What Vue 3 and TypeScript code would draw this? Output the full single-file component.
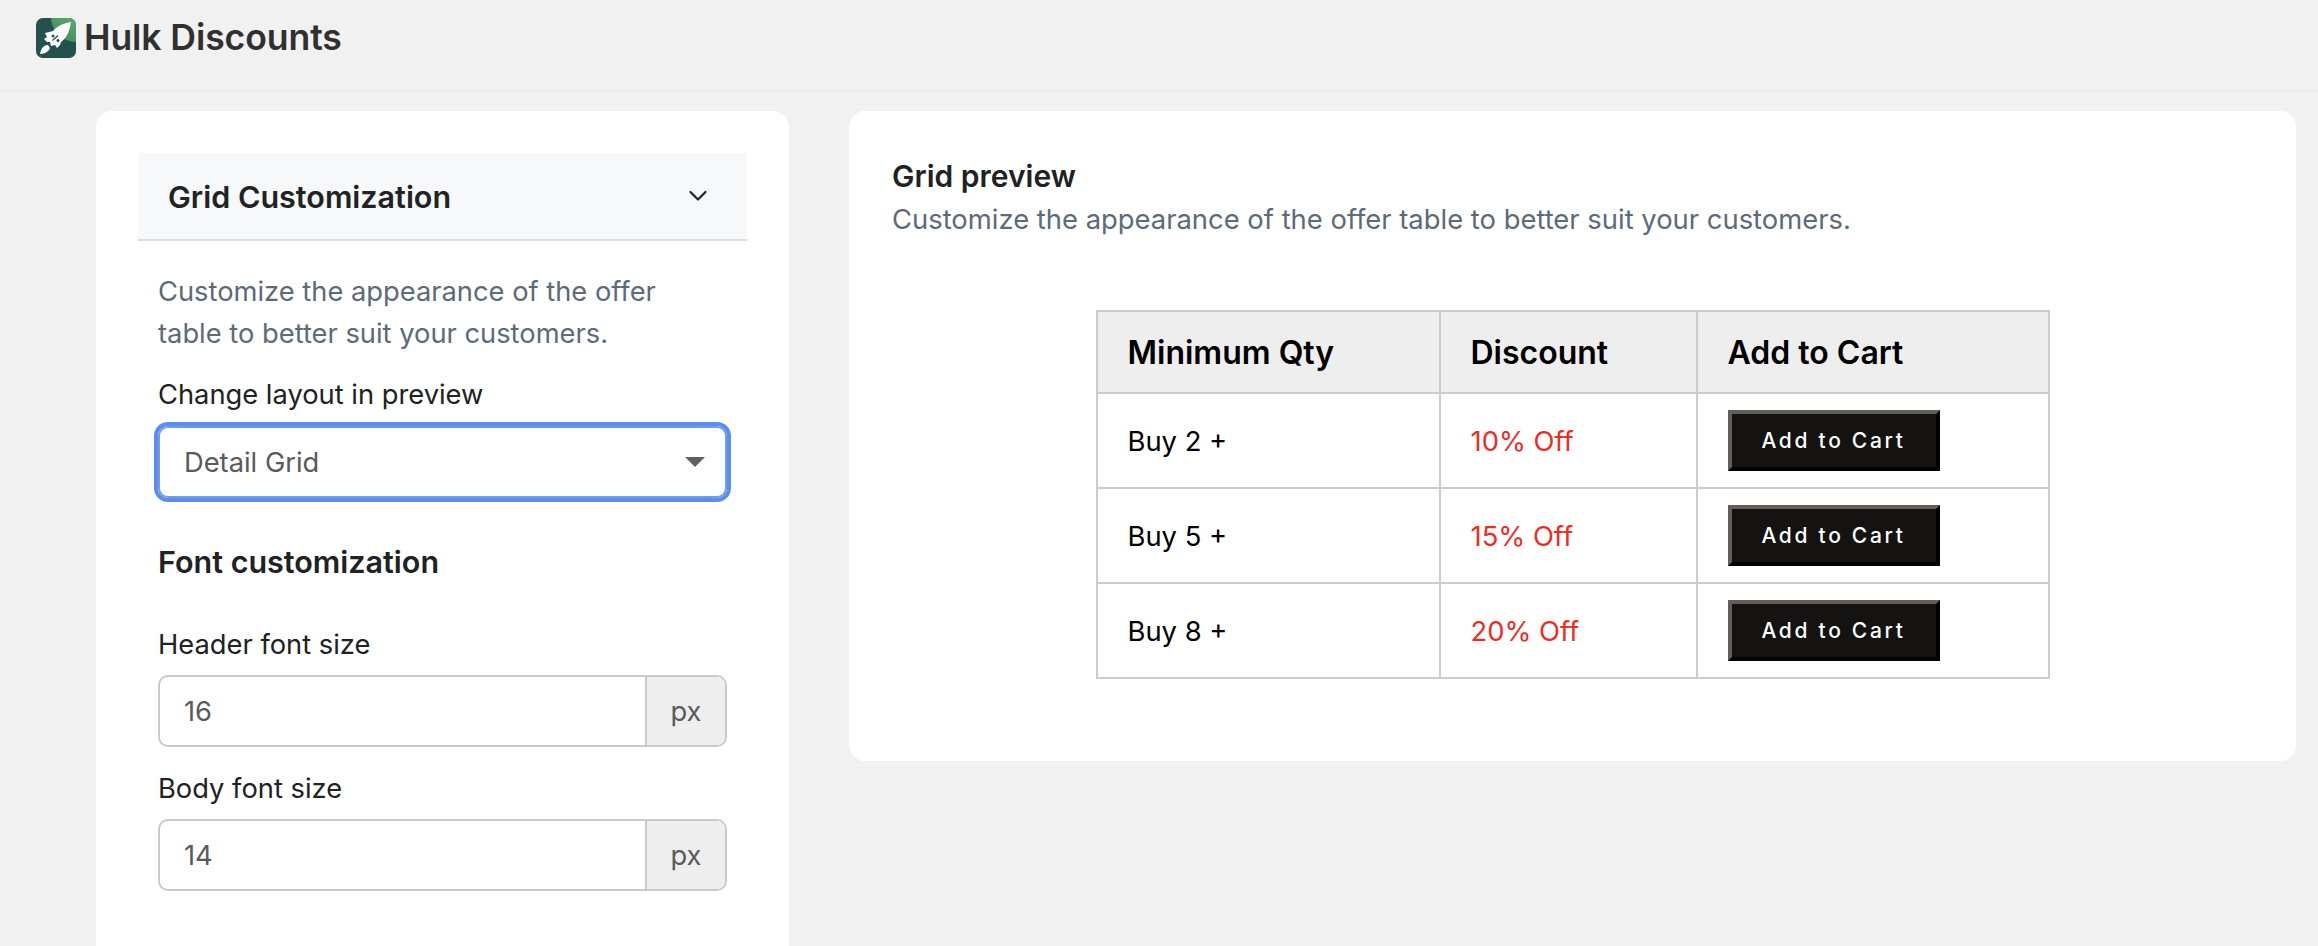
<script setup lang="ts">
const rows = [
  { qty: 'Buy 2 +', off: '10% Off' },
  { qty: 'Buy 5 +', off: '15% Off' },
  { qty: 'Buy 8 +', off: '20% Off' },
]
</script>

<template>
  <div class="page">
    <header class="topbar">
      <svg class="logo" viewBox="0 0 40 40" width="40" height="40" aria-hidden="true">
        <defs>
          <clipPath id="lc"><rect width="40" height="40" rx="7" /></clipPath>
          <linearGradient id="lg" x1="0.9" y1="0" x2="0.2" y2="1">
            <stop offset="0" stop-color="#8fcb85" />
            <stop offset="1" stop-color="#3f8a5c" />
          </linearGradient>
        </defs>
        <g clip-path="url(#lc)">
          <rect width="40" height="40" fill="#24504d" />
          <circle cx="40" cy="-1" r="25" fill="url(#lg)" />
          <path d="M35 4 C28 5 21 8 17 13 L13 14 L9 15 L11 19 L8 21 L11 24 L14 24 L15 28 L19 27 L21 30 L24 27 L25 24 C31 20 34 12 35 4 Z" fill="#fff" />
          <path d="M12 27 C8 27 5 30 4 36 C9 36 13 33 14 30 Z" fill="#fff" />
          <path d="M16.5 22.5 L22 17.5" stroke="#24504d" stroke-width="1.3" />
          <circle cx="17" cy="18" r="1.5" fill="#24504d" />
          <circle cx="22" cy="22.5" r="1.5" fill="#24504d" />
        </g>
      </svg>
      <span class="brand">Hulk Discounts</span>
    </header>

    <main class="content">
      <section class="card side">
        <div class="acc-head">
          <span>Grid Customization</span>
          <svg width="24" height="24" viewBox="0 0 24 24" aria-hidden="true">
            <path d="M4.5 8 L12 15.5 L19.5 8" fill="none" stroke="#202223" stroke-width="2.2" stroke-linecap="round" stroke-linejoin="round" />
          </svg>
        </div>
        <div class="acc-body">
          <p class="help">Customize the appearance of the offer table to better suit your customers.</p>
          <label class="lbl first">Change layout in preview</label>
          <div class="select">
            <span>Detail Grid</span>
            <i class="caret"></i>
          </div>
          <h3 class="sub">Font customization</h3>
          <label class="lbl">Header font size</label>
          <div class="field">
            <span class="val">16</span>
            <span class="unit">px</span>
          </div>
          <label class="lbl second">Body font size</label>
          <div class="field">
            <span class="val">14</span>
            <span class="unit">px</span>
          </div>
        </div>
      </section>

      <section class="card preview">
        <h2 class="title">Grid preview</h2>
        <p class="desc">Customize the appearance of the offer table to better suit your customers.</p>
        <table class="grid">
          <thead>
            <tr>
              <th class="c1">Minimum Qty</th>
              <th class="c2">Discount</th>
              <th class="c3">Add to Cart</th>
            </tr>
          </thead>
          <tbody>
            <tr v-for="r in rows" :key="r.qty">
              <td>{{ r.qty }}</td>
              <td class="off">{{ r.off }}</td>
              <td><button class="cart" type="button">Add to Cart</button></td>
            </tr>
          </tbody>
        </table>
      </section>
    </main>
  </div>
</template>

<style>
html, body { margin: 0; background: #f1f1f1; }
</style>

<style scoped>
.page {
  width: 2318px;
  height: 946px;
  overflow: hidden;
  background: #f1f1f1;
  font-family: Inter, "Liberation Sans", sans-serif;
  color: #202223;
}
.topbar {
  height: 72px;
  border-bottom: 2px solid #ebebeb;
  display: flex;
  align-items: flex-start;
  padding: 18px 0 0 36px;
  gap: 8px;
}
.logo { flex: none; }
.brand {
  font-size: 35.6px;
  line-height: 40px;
  font-weight: 600;
  color: #303030;
  letter-spacing: -0.1px;
}
.content {
  display: flex;
  align-items: flex-start;
  gap: 60px;
  padding: 19px 22px 0 96px;
}
.card {
  background: #fff;
  border-radius: 16px;
  box-sizing: border-box;
}
.side {
  width: 693px;
  height: 900px;
  flex: none;
  padding: 42px;
}
.acc-head {
  height: 86px;
  background: #f7f8fa;
  border-bottom: 2px solid #dcdddf;
  display: flex;
  align-items: center;
  justify-content: space-between;
  padding: 0 37px 0 30px;
  font-size: 30.5px;
  font-weight: 600;
}
.acc-body { padding: 0 20px; }
.help {
  margin: 30px 0 0;
  font-size: 27.3px;
  line-height: 42px;
  color: #5c6a7a;
}
.lbl {
  display: block;
  font-size: 27.3px;
  line-height: 36px;
  color: #202223;
}
.first { margin-top: 22px; }
.second { margin-top: 24px; }
.select {
  margin: 13px 0 0;
  height: 72px;
  box-sizing: border-box;
  border: 2px solid #6f9fe6;
  box-shadow: 0 0 0 4px #5b8def;
  border-radius: 10px;
  display: flex;
  align-items: center;
  justify-content: space-between;
  padding: 0 20px 0 24px;
  font-size: 27.3px;
  color: #5a5a5a;
}
.caret {
  width: 0;
  height: 0;
  border-left: 10px solid transparent;
  border-right: 10px solid transparent;
  border-top: 10px solid #5f6064;
}
.sub {
  margin: 46px 0 47px;
  font-size: 30.5px;
  line-height: 36px;
  font-weight: 600;
}
.field {
  margin-top: 12px;
  height: 72px;
  box-sizing: border-box;
  border: 2px solid #c9cacf;
  border-radius: 10px;
  display: flex;
  overflow: hidden;
  font-size: 27.3px;
  color: #5a5a5a;
}
.val {
  flex: 1;
  display: flex;
  align-items: center;
  padding-left: 24px;
}
.unit {
  width: 80px;
  flex: none;
  box-sizing: border-box;
  border-left: 2px solid #c9cacf;
  background: #eeeeee;
  display: flex;
  align-items: center;
  justify-content: center;
}
.preview {
  flex: 1;
  height: 650px;
  padding: 47px 43px 0;
}
.title {
  margin: 0;
  font-size: 30px;
  line-height: 36px;
  font-weight: 600;
}
.desc {
  margin: 7px 0 0;
  font-size: 27.4px;
  line-height: 36px;
  color: #5c6a7a;
}
.grid {
  margin: 73px auto 0;
  border-collapse: collapse;
  width: 954px;
  table-layout: fixed;
  font-size: 27.4px;
  color: #000;
}
.grid th, .grid td {
  border: 2px solid #cccccc;
  padding: 0 0 0 30px;
  text-align: left;
  height: 95px;
  box-sizing: border-box;
}
.grid th {
  height: 82px;
  background: #eeeeee;
  font-size: 32px;
  font-weight: 600;
}
.c1 { width: 343px; }
.c2 { width: 257px; }
.off { color: #ee2c1f; }
.cart {
  display: block;
  width: 212px;
  height: 61px;
  box-sizing: border-box;
  background: #141311;
  border-style: solid;
  border-width: 4px;
  border-color: #645e5b #000 #000 #645e5b;
  color: #fff;
  font-family: inherit;
  font-size: 21px;
  font-weight: 500;
  letter-spacing: 2.7px;
  padding: 0;
}
</style>
